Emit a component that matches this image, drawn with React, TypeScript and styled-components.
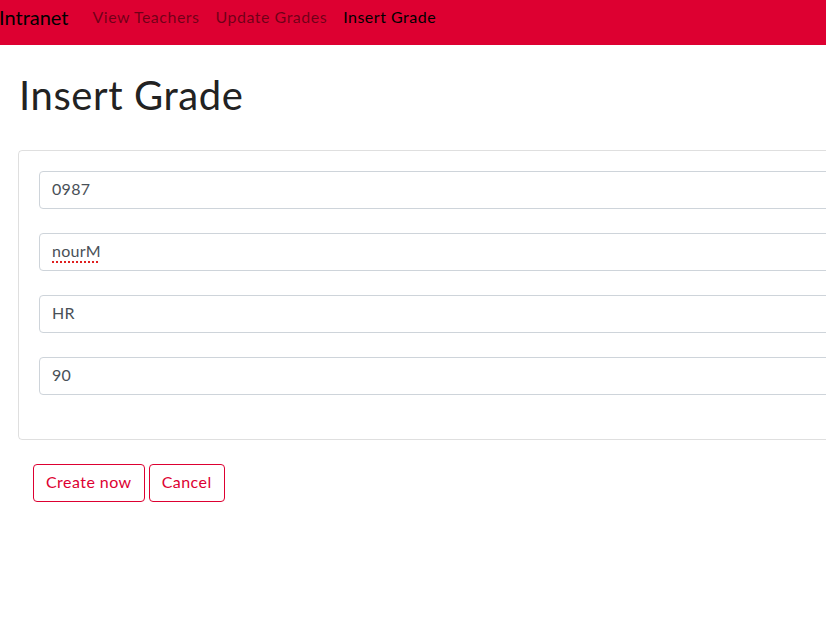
import React from "react";
import styled, { createGlobalStyle } from "styled-components";

const Global = createGlobalStyle`
  html, body { margin: 0; padding: 0; background: #fff; overflow: hidden; }
  body { font-family: Lato, "Open Sans", "Liberation Sans", sans-serif; color: #222; width: 1100px; }
  * { box-sizing: border-box; }
`;

const Navbar = styled.nav`
  display: flex;
  align-items: center;
  height: 45px;
  background: #dd0031;
  padding: 0 0 12px 0;
  margin-left: -1px;
`;

const Brand = styled.span`
  font-size: 20px;
  color: #000;
  margin-right: 16px;
`;

const NavLink = styled.a<{ $active?: boolean }>`
  font-size: 16px;
  letter-spacing: 0.5px;
  padding: 0 8px;
  color: ${(p) => (p.$active ? "#000" : "rgba(0,0,0,0.5)")};
  text-decoration: none;
`;

const Main = styled.main`
  padding: 0 0 0 18px;
`;

const Title = styled.h1`
  margin: 0;
  padding: 26px 0 0 1px;
  font-size: 40px;
  letter-spacing: 0.6px;
  font-weight: 400;
  line-height: 48px;
  color: #222;
  height: 105px;
`;

const Card = styled.div`
  border: 1px solid rgba(0, 0, 0, 0.125);
  border-radius: 4px;
  padding: 20px 20px 20px;
  margin-bottom: 24px;
`;

const Input = styled.div`
  height: 38px;
  border: 1px solid #ced4da;
  border-radius: 4px;
  padding: 0 12px 3px;
  display: flex;
  align-items: center;
  font-size: 16px;
  letter-spacing: 0.3px;
  color: #495057;
  margin-bottom: 24px;
`;

const Spell = styled.span`
  text-decoration: underline dotted #e02020;
  text-decoration-thickness: 2px;
  text-underline-offset: 4px;
`;

const Actions = styled.div`
  display: flex;
  gap: 4px;
  padding-left: 15px;
`;

const Button = styled.button`
  height: 38px;
  padding: 0 12px 3px;
  border: 1px solid #dd0031;
  border-radius: 4px;
  background: #fff;
  color: #dd0031;
  font-family: inherit;
  font-size: 16px;
  letter-spacing: 0.45px;
`;

export default function App() {
  return (
    <>
      <Global />
      <Navbar>
        <Brand>Intranet</Brand>
        <NavLink>View Teachers</NavLink>
        <NavLink>Update Grades</NavLink>
        <NavLink $active>Insert Grade</NavLink>
      </Navbar>
      <Main>
        <Title>Insert Grade</Title>
        <Card>
          <Input>0987</Input>
          <Input><Spell>nourM</Spell></Input>
          <Input>HR</Input>
          <Input>90</Input>
        </Card>
        <Actions>
          <Button>Create now</Button>
          <Button>Cancel</Button>
        </Actions>
      </Main>
    </>
  );
}
